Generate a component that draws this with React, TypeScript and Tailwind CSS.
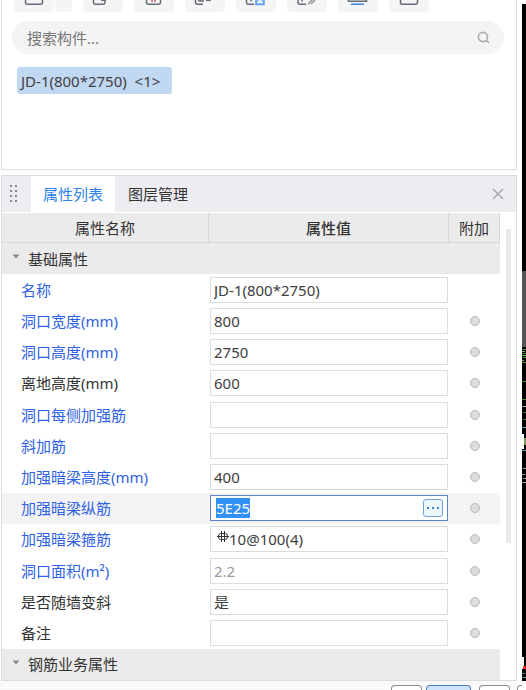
import React, { useEffect, useRef, useState } from "react";

type Property = {
  id: string;
  label: string;
  value: string;
  linked?: boolean;
  readOnly?: boolean;
  noExtra?: boolean;
};

const properties: Property[] = [
  { id: "name", label: "名称", value: "JD-1(800*2750)", linked: true, noExtra: true },
  { id: "width", label: "洞口宽度(mm)", value: "800", linked: true },
  { id: "height", label: "洞口高度(mm)", value: "2750", linked: true },
  { id: "ground", label: "离地高度(mm)", value: "600" },
  { id: "side", label: "洞口每侧加强筋", value: "", linked: true },
  { id: "diagonal", label: "斜加筋", value: "", linked: true },
  { id: "beamHeight", label: "加强暗梁高度(mm)", value: "400", linked: true },
  { id: "beamBars", label: "加强暗梁纵筋", value: "5E25", linked: true },
  { id: "beamStirrup", label: "加强暗梁箍筋", value: "10@100(4)", linked: true },
  { id: "area", label: "洞口面积(m²)", value: "2.2", linked: true, readOnly: true },
  { id: "followWall", label: "是否随墙变斜", value: "是" },
  { id: "remark", label: "备注", value: "" },
];

const ToolButton = ({ label, children }: { label: string; children: React.ReactNode }) => (
  <button type="button" aria-label={label} className="h-3 w-10 rounded-b-sm bg-[#f5f5f6]">
    <svg width="40" height="12" fill="none" stroke="#656a76" strokeWidth="1.5" className="block">
      {children}
    </svg>
  </button>
);

const Toolbar = () => (
  <div className="flex gap-[11px] pl-3">
    <div className="flex gap-px">
      <ToolButton label="新建">
        <path d="M11.5 0V2.5Q11.5 4.2 13.5 4.2H26.5Q28.5 4.2 28.5 2.5V0" />
      </ToolButton>
      <button type="button" aria-label="更多新建" className="h-3 w-[17px] rounded-b-sm bg-[#f5f5f6]" />
    </div>
    <ToolButton label="复制">
      <path d="M10.5 0V2.5Q10.5 4.2 12 4.2H20.5Q22 4.2 22 2.5V0M18 .2H23" />
    </ToolButton>
    <ToolButton label="删除">
      <path d="M12.5 0V2.5Q12.5 4.2 14.5 4.2H24.5Q26.5 4.2 26.5 2.5V0" />
      <path d="M17.5 0L18.5 2M21.5 0L20.5 2" stroke="#d45a6a" />
    </ToolButton>
    <ToolButton label="层间复制">
      <path d="M10.5 0V2.5Q10.5 4.2 12.5 4.2H18M13.5 0Q13.5 1 15 1H19M21 .3H26" />
    </ToolButton>
    <ToolButton label="存档">
      <path d="M10.5 0V2.5Q10.5 4.2 12 4.2H18M15 0V1.5" />
      <rect x="20" y="-3" width="8" height="7.5" fill="#9fc6f5" stroke="#5b9ae6" />
      <path d="M22 3L24 1L26 3" stroke="#fff" />
    </ToolButton>
    <ToolButton label="编辑">
      <path d="M11 0V2.5Q11 4.2 12.5 4.2H19M15 0V1.5" />
      <path d="M21.5 4.5L22.5 2.5L26 -1M24 4L28 0" stroke="#92969e" />
    </ToolButton>
    <ToolButton label="排序">
      <path d="M10.5 0V1.2H28.5V0" />
      <path d="M13 4.2H26" stroke="#3a83db" />
    </ToolButton>
    <ToolButton label="窗口">
      <path d="M11.5 0V2.5Q11.5 4.2 13.5 4.2H26.5Q28.5 4.2 28.5 2.5V0" />
    </ToolButton>
  </div>
);

const RebarSymbol = () => (
  <svg width="12" height="14" fill="none" stroke="#333" className="mb-1 ml-[3px] shrink-0">
    <path d="M3.5 3.5H8.5Q10.5 3.5 10.5 6.5Q10.5 9.5 8.5 9.5H3.5Q1.5 9.5 1.5 6.5Q1.5 3.5 3.5 3.5Z" />
    <path d="M0 6.5H12M4.5 1V12M7.5 1V12" />
  </svg>
);

const GroupRow = ({ title }: { title: string }) => (
  <tr className="h-[31px] bg-[#ebebeb]">
    <th colSpan={3} scope="colgroup" className="p-0 text-left font-normal">
      <button type="button" className="flex items-center pl-[10px]">
        <svg width="8" height="5" className="mr-2 mb-1 shrink-0">
          <path d="M0.5 0.5H7.5L4 4.5Z" fill="#888" />
        </svg>
        {title}
      </button>
    </th>
  </tr>
);

const PropertyRow = ({ item }: { item: Property }) => {
  const [value, setValue] = useState(item.value);
  const inputRef = useRef<HTMLInputElement>(null);
  const active = item.id === "beamBars";

  useEffect(() => {
    if (active) {
      inputRef.current?.focus();
      inputRef.current?.select();
    }
  }, [active]);

  return (
    <tr className={active ? "h-[31px] bg-[#f3f3f5]" : "h-[31px]"}>
      <th scope="row" className="p-0 pl-[19px] text-left font-normal">
        <label htmlFor={item.id} className={item.linked ? "text-[#2f62e4]" : "text-[#333]"}>
          {item.label}
        </label>
      </th>
      <td className="p-0 pr-px pl-px">
        <div
          className={
            active
              ? "flex h-[26px] items-center border border-[#5b84d0] bg-white pr-1 pl-[5px]"
              : "flex h-[26px] items-center border border-[#dcdcdc] bg-white pl-[3px]"
          }
        >
          {item.id === "beamStirrup" && <RebarSymbol />}
          <input
            id={item.id}
            ref={inputRef}
            type="text"
            value={value}
            readOnly={item.readOnly}
            onChange={(e) => setValue(e.target.value)}
            className={
              item.readOnly
                ? "h-5 w-full min-w-0 text-[#999] outline-none"
                : "h-5 w-full min-w-0 text-[#404040] outline-none selection:bg-[#3390f5] selection:text-white"
            }
          />
          {active && (
            <button
              type="button"
              aria-label="更多"
              className="flex h-[18px] w-5 shrink-0 items-center justify-center rounded-[3px] border border-[#6fa3dc] bg-[#edf5fd]"
            >
              <svg width="14" height="4" fill="#3d7fcf">
                <rect x="1" y="1" width="2" height="2" />
                <rect x="6" y="1" width="2" height="2" />
                <rect x="11" y="1" width="2" height="2" />
              </svg>
            </button>
          )}
        </div>
      </td>
      <td className="p-0">
        {!item.noExtra && (
          <input
            type="checkbox"
            aria-label={"附加 " + item.label}
            className="mx-auto block size-[10px] appearance-none rounded-full border border-[#b9b9bd] bg-[#dddde0]"
          />
        )}
      </td>
    </tr>
  );
};

// Sliver of the drawing area that shows to the right of the panels
const CanvasEdge = () => (
  <div className="mt-1 mb-[9px] w-1 shrink-0 overflow-hidden bg-black">
    <svg width="4" height="677" shapeRendering="crispEdges" className="block">
      <rect y="267" width="4" height="76" fill="#555" />
      <path d="M0 345.5H4M0 349.5H4M1 353.5H4M0 358.5H4M0 377.5H4M0 395.5H4M1 408.5H4M1 415.5H4" stroke="#3c8a2c" />
      <path d="M0 347.5H3M0 351.5H4M0 356.5H2" stroke="#7da876" />
      <path d="M0 402.5H4M1 464.5H4M0 470.5H3M1 474.5H4M0 478.5H4" stroke="#999" />
      <path d="M0 423.5H4M0 446.5H4" stroke="#4aa3b8" />
      <rect y="430" width="2" height="15" fill="#fff" />
      <rect x="2" y="434" width="2" height="7" fill="#779955" />
      <rect y="653" width="2" height="12" fill="#fff" />
      <path d="M0 673.5H4M0 669.5H3" stroke="#3b8585" />
      <rect x="1" y="662" width="3" height="3" fill="#d22" />
    </svg>
  </div>
);

const App: React.FC = () => {
  return (
    <div className="flex min-h-screen bg-white font-['Noto_Sans','Noto_Sans_CJK_SC',sans-serif] text-[15px] leading-5 text-[#333]">
      <div className="flex min-w-0 flex-1 flex-col">
        <section className="mr-[5px] ml-px flex h-[170px] flex-col border-x border-b border-[#dcdcdc]">
          <Toolbar />
          <div className="mt-[9px] mr-3 ml-[10px] flex h-[33px] items-center rounded-full bg-[#f4f4f4] pr-[14px] pl-[15px]">
            <input
              type="text"
              aria-label="搜索构件"
              placeholder="搜索构件..."
              className="h-5 min-w-0 flex-1 outline-none placeholder:text-[#777]"
            />
            <button type="button" aria-label="搜索">
              <svg width="13" height="13" fill="none" stroke="#a9a9a9" strokeWidth="1.6" className="block">
                <circle cx="6" cy="6" r="4.6" />
                <path d="M9 9L12 12" />
              </svg>
            </button>
          </div>
          <ul className="mt-[13px] ml-[15px]">
            <li>
              <button
                type="button"
                className="h-[27px] rounded-[3px] bg-[#c0d8f1] pr-3 pl-1 whitespace-pre text-[#404040]"
              >
                {"JD-1(800*2750)  <1>"}
              </button>
            </li>
          </ul>
        </section>

        <section className="mt-[5px] mr-[5px] ml-px flex flex-1 flex-col border border-[#dcdcdc]">
          <div className="flex h-9 items-stretch bg-[#ececf1]">
            <svg width="29" height="36" fill="#888" className="shrink-0">
              <path d="M8 9h2v2h-2zM13 9h2v2h-2zM8 14h2v2h-2zM13 14h2v2h-2zM8 19h2v2h-2zM13 19h2v2h-2zM8 24h2v2h-2zM13 24h2v2h-2z" />
            </svg>
            <div role="tablist" className="flex flex-1 gap-px">
              <button type="button" role="tab" aria-selected="true" className="bg-white px-3 text-[#2d82e2]">
                属性列表
              </button>
              <button type="button" role="tab" aria-selected="false" className="px-3">
                图层管理
              </button>
            </div>
            <button type="button" aria-label="关闭" className="pr-3">
              <svg width="12" height="12" stroke="#a4a4a8" strokeWidth="1.4">
                <path d="M1 1L11 11M11 1L1 11" />
              </svg>
            </button>
          </div>

          <div className="flex flex-1 pt-px">
            <table className="min-w-0 flex-1 table-fixed border-separate border-spacing-0">
              <colgroup>
                <col />
                <col className="w-[240px]" />
                <col className="w-[51px]" />
              </colgroup>
              <thead>
                <tr className="h-[30px] bg-[#ebebeb]">
                  <th className="border-r border-b border-[#d8d8d8] p-0 font-normal">属性名称</th>
                  <th className="border-r border-b border-[#d8d8d8] p-0 font-medium">属性值</th>
                  <th className="border-r border-b border-[#d8d8d8] p-0 font-normal">附加</th>
                </tr>
              </thead>
              <tbody>
                <GroupRow title="基础属性" />
                {properties.map((item) => (
                  <PropertyRow key={item.id} item={item} />
                ))}
                <GroupRow title="钢筋业务属性" />
              </tbody>
            </table>
            <div className="w-4 shrink-0 pt-4 pl-[6px]">
              <div className="h-[314px] w-[5px] bg-[#e9e9e9]" />
            </div>
          </div>
        </section>

        <footer className="flex h-[9px] items-end justify-end bg-[#fafafa]">
          <button type="button" aria-label="上一项" className="mr-1 h-[5px] w-[31px] rounded-t-[4px] border border-b-0 border-[#8c8c8c] bg-white" />
          <button type="button" aria-label="当前项" className="mr-2 h-[5px] w-[45px] rounded-t-[4px] border border-b-0 border-[#4a7fd0] bg-[#cfe3fb]" />
          <button type="button" aria-label="下一项" className="mr-[7px] h-[5px] w-[31px] rounded-t-[4px] border border-b-0 border-[#8c8c8c] bg-white" />
          <button type="button" aria-label="末项" className="h-[5px] w-[5px] rounded-tl-[4px] border border-r-0 border-b-0 border-[#8c8c8c] bg-white" />
        </footer>
      </div>
      <CanvasEdge />
    </div>
  );
};

export default App;
